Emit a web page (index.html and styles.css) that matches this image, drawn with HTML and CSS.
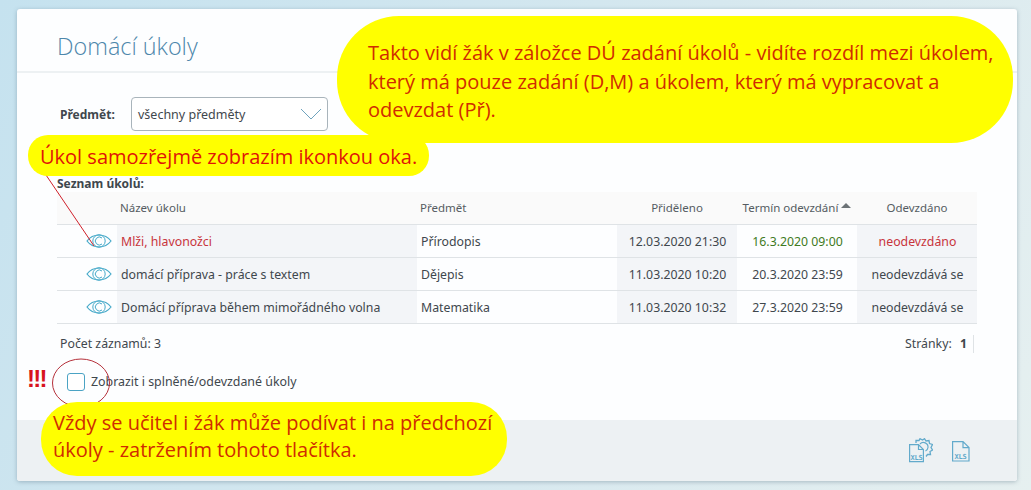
FILE: index.html
```html
<!DOCTYPE html>
<html>
<head>
    <title>Domácí úkoly</title>
    <link rel="stylesheet" href="styles.css">
</head>
<body>
    <div class="card">
        <div class="card-head">
            <h1>Domácí úkoly</h1>
        </div>
        <div class="card-body">
            <div class="filter">
                <label>Předmět:</label>
                <div class="select">
                    <span>všechny předměty</span>
                    <svg width="22" height="12" viewBox="0 0 22 12"><path d="M1 1 L11 11 L21 1" fill="none" stroke="#6fa3bd" stroke-width="1"/></svg>
                </div>
            </div>
            <div class="list-title">Seznam úkolů:</div>
            <table class="tasks">
                <colgroup>
                    <col class="col-icon">
                    <col class="col-name">
                    <col class="col-subject">
                    <col class="col-date">
                    <col class="col-date">
                    <col class="col-date">
                </colgroup>
                <thead>
                    <tr>
                        <th></th>
                        <th>Název úkolu</th>
                        <th>Předmět</th>
                        <th class="mid">Přiděleno</th>
                        <th class="mid">Termín odevzdání <i class="sort"></i></th>
                        <th class="mid">Odevzdáno</th>
                    </tr>
                </thead>
                <tbody>
                    <tr>
                        <td class="eye"><svg width="26" height="16" viewBox="0 0 26 16"><use href="#eye"/></svg></td>
                        <td class="shade red">Mlži, hlavonožci</td>
                        <td>Přírodopis</td>
                        <td class="shade mid">12.03.2020 21:30</td>
                        <td class="mid green">16.3.2020 09:00</td>
                        <td class="shade mid red">neodevzdáno</td>
                    </tr>
                    <tr>
                        <td class="eye"><svg width="26" height="16" viewBox="0 0 26 16"><use href="#eye"/></svg></td>
                        <td class="shade">domácí příprava - práce s textem</td>
                        <td>Dějepis</td>
                        <td class="shade mid">11.03.2020 10:20</td>
                        <td class="mid">20.3.2020 23:59</td>
                        <td class="shade mid">neodevzdává se</td>
                    </tr>
                    <tr>
                        <td class="eye"><svg width="26" height="16" viewBox="0 0 26 16"><use href="#eye"/></svg></td>
                        <td class="shade">Domácí příprava během mimořádného volna</td>
                        <td>Matematika</td>
                        <td class="shade mid">11.03.2020 10:32</td>
                        <td class="mid">27.3.2020 23:59</td>
                        <td class="shade mid">neodevzdává se</td>
                    </tr>
                </tbody>
            </table>
            <div class="table-foot">
                <span>Počet záznamů: 3</span>
                <span class="pages">Stránky: <b>1</b></span>
            </div>
            <label class="check">
                <span class="box"></span>
                Zobrazit i splněné/odevzdané úkoly
            </label>
        </div>
        <div class="card-foot">
            <svg class="xls-gear" width="24" height="25" viewBox="0 0 24 25">
                <path d="M7 5 L7 2.5 L10 2.5 L11 0.7 L13.5 2 L15.5 0.7 L17 3 L20 2.5 L20.5 5.5 L23.5 6.5 L22 9.5 L23.5 12 L21 13.5 L21.5 16.5 L18.5 16.5 L17 18.5" fill="none" stroke="#62aacb" stroke-width="1.3"/>
                <path d="M11 6 A4.6 4.6 0 0 1 19 9.5 A4.6 4.6 0 0 1 16.5 13" fill="none" stroke="#62aacb" stroke-width="1.2"/>
                <path d="M0.6 6.6 H9.5 L14.4 11.5 V23.6 H0.6 Z M9.5 6.6 V11.5 H14.4" fill="#edf1f3" stroke="#62aacb" stroke-width="1.2"/>
                <text x="1.5" y="21.5" class="xls-text">XLS</text>
            </svg>
            <svg class="xls" width="18" height="21" viewBox="0 0 18 21">
                <path d="M0.6 0.6 H11 L17 6.6 V20 H0.6 Z M11 0.6 V6.6 H17" fill="none" stroke="#62aacb" stroke-width="1.2"/>
                <text x="2.5" y="17.5" class="xls-text">XLS</text>
            </svg>
        </div>
    </div>

    <!-- poznámky přes screenshot -->
    <svg class="marks" width="1031" height="490" viewBox="0 0 1031 490">
        <line x1="46" y1="175" x2="94" y2="246" stroke="#d0202a" stroke-width="1"/>
        <ellipse cx="81" cy="383" rx="28.5" ry="24" fill="none" stroke="#b5303a" stroke-width="1"/>
    </svg>
    <div class="note note-eye">Úkol samozřejmě zobrazím ikonkou oka.</div>
    <div class="note note-top">Takto vidí žák v záložce DÚ zadání úkolů - vidíte rozdíl mezi úkolem, který má pouze zadání (D,M) a úkolem, který má vypracovat a odevzdat (Př).</div>
    <div class="note note-bottom">Vždy se učitel i žák může podívat i na předchozí úkoly - zatržením tohoto tlačítka.</div>
    <div class="bang">!!!</div>

    <svg class="defs" width="0" height="0">
        <symbol id="eye" viewBox="0 0 26 16">
            <path d="M1 8 C7 0 19 0 25 8 C19 16 7 16 1 8 Z" fill="none" stroke="#45a9c9" stroke-width="1.2"/>
            <circle cx="13" cy="8" r="6.2" fill="none" stroke="#45a9c9" stroke-width="1"/>
            <path d="M16 5 A4 4 0 1 0 16 11" fill="none" stroke="#45a9c9" stroke-width="1"/>
        </symbol>
    </svg>
</body>
</html>
```
FILE: styles.css
```css
html, body {
    height: 100%;
    margin: 0;
    padding: 0;
}

body {
    width: 1031px;
    height: 490px;
    overflow: hidden;
    position: relative;
    box-sizing: border-box;
    padding: 9px 14px 9px 17px;
    font-family: "Noto Sans", sans-serif;
    font-size: 12px;
    color: #3f474d;
    background: linear-gradient(120deg, #c5e2ef 0%, #d6e8ef 55%, #e6f0f0 100%);
}

.card {
    height: 472px;
    display: flex;
    flex-direction: column;
    background: #fdfeff;
    border-radius: 3px;
    box-shadow: 0 1px 4px rgba(60, 90, 110, 0.35);
}

.card-head {
    height: 64px;
    box-sizing: border-box;
    padding: 21px 0 0 40px;
    border-bottom: 2px solid #edf1f3;
}

.card-head h1 {
    margin: 0;
    font-family: "Open Sans", sans-serif;
    font-weight: 300;
    font-size: 23.4px;
    line-height: 32px;
    color: #4d87ab;
}

.card-body {
    flex: 1;
    padding: 0 40px;
}

.filter {
    display: flex;
    align-items: center;
    margin-top: 24px;
    padding-left: 3px;
}

.filter label {
    width: 71px;
    font-weight: 700;
}

.select {
    box-sizing: border-box;
    width: 197px;
    height: 34px;
    padding: 0 5px 0 6px;
    display: flex;
    align-items: center;
    justify-content: space-between;
    border: 1px solid #a9b4bb;
    border-radius: 4px;
    background: #fff;
    font-size: 12.5px;
}

.list-title {
    margin-top: 44px;
    height: 17px;
    line-height: 17px;
    font-weight: 700;
}

.tasks {
    width: 920px;
    table-layout: fixed;
    border-collapse: collapse;
}

.col-icon {
    width: 60px;
}

.col-name {
    width: 300px;
}

.col-subject {
    width: 200px;
}

.col-date {
    width: 120px;
}

.tasks th {
    box-sizing: border-box;
    height: 32px;
    padding: 0 3px;
    background: #fafafa;
    border-bottom: 1px solid #dfe3e6;
    font-weight: 400;
    font-size: 11.5px;
    text-align: left;
    color: #555c62;
    white-space: nowrap;
}

.tasks td {
    box-sizing: border-box;
    height: 33px;
    padding: 1px 3px 0 4px;
    border-bottom: 1px solid #dfe3e6;
    font-size: 12.3px;
    white-space: nowrap;
}

.tasks .mid {
    text-align: center;
}

.tasks td.eye {
    padding: 0 5px 0 0;
    text-align: right;
    line-height: 0;
}

.tasks td.shade {
    background: #f3f5f8;
}

.tasks td.red {
    color: #c8343c;
}

.tasks td.green {
    color: #3f7a22;
}

.sort {
    display: inline-block;
    width: 0;
    height: 0;
    vertical-align: 4px;
    border-left: 5px solid transparent;
    border-right: 5px solid transparent;
    border-bottom: 5px solid #6c7276;
}

.table-foot {
    display: flex;
    justify-content: space-between;
    align-items: center;
    height: 40px;
    padding-left: 3px;
    font-size: 12.3px;
}

.pages {
    margin-right: 3px;
    border-right: 1px solid #dfe3e6;
    line-height: 18px;
}

.pages b {
    margin-left: 5px;
    margin-right: 6px;
}

.check {
    display: flex;
    align-items: center;
    gap: 6px;
    margin-top: 9px;
    margin-left: 10px;
    font-size: 12.4px;
}

.box {
    box-sizing: border-box;
    width: 18px;
    height: 18px;
    border: 1.5px solid #4aa3c4;
    border-radius: 3px;
    background: #fff;
}

.card-foot {
    height: 61px;
    box-sizing: border-box;
    display: flex;
    justify-content: flex-end;
    align-items: flex-start;
    gap: 19px;
    padding: 18px 47px 0 0;
    background: #edf1f3;
    border-radius: 0 0 3px 3px;
}

.xls {
    margin-top: 3px;
}

.xls-text {
    font-family: "DejaVu Sans Mono", monospace;
    font-size: 7px;
    font-weight: 700;
    letter-spacing: -0.2px;
    fill: #62aacb;
}

.marks {
    position: absolute;
    left: 0;
    top: 0;
}

.defs {
    position: absolute;
}

.note {
    position: absolute;
    box-sizing: border-box;
    background: #ffff00;
    color: #d02c00;
    font-family: "Open Sans", sans-serif;
    font-size: 20px;
}

.note-top {
    left: 337px;
    top: 16px;
    width: 676px;
    height: 127px;
    padding: 23px 14px 0 31px;
    line-height: 28.5px;
    border-radius: 62px;
}

.note-eye {
    left: 28px;
    top: 135px;
    width: 401px;
    height: 41px;
    padding: 0 0 0 12px;
    line-height: 43px;
    white-space: nowrap;
    border-radius: 20px;
    color: #e01408;
}

.note-bottom {
    left: 41px;
    top: 402px;
    width: 466px;
    height: 74px;
    padding: 7px 12px 0 12px;
    line-height: 27px;
    border-radius: 36px;
}

.bang {
    position: absolute;
    left: 27px;
    top: 364px;
    font-family: "Liberation Sans", sans-serif;
    font-weight: 700;
    font-size: 24px;
    letter-spacing: -1.7px;
    line-height: 30px;
    color: #d8141e;
}
```
